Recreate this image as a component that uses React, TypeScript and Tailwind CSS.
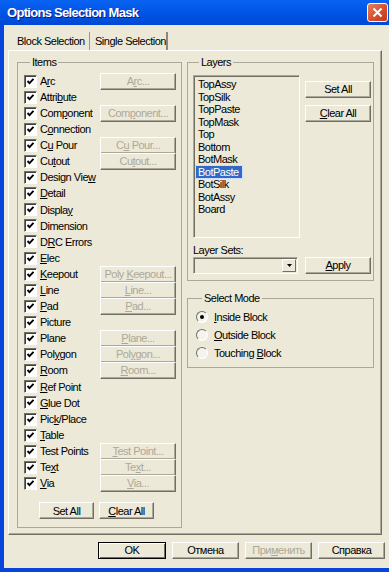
import React from 'react';

const FONT = "font-['Liberation_Sans',Arial,sans-serif]";

// '&' marks the mnemonic (underlined) letter
const Label: React.FC<{ text: string }> = ({ text }) => {
  const i = text.indexOf('&');
  if (i < 0) return <>{text}</>;
  return (
    <>
      {text.slice(0, i)}
      <u>{text.charAt(i + 1)}</u>
      {text.slice(i + 2)}
    </>
  );
};

const Btn: React.FC<{ text: string; disabled?: boolean; def?: boolean; className?: string }> = ({
  text,
  disabled,
  def,
  className = '',
}) => (
  <div
    className={`flex items-center justify-center h-[17px] whitespace-nowrap overflow-hidden text-[11px] tracking-[-0.5px] bg-[#ece9d8] ${
      def
        ? 'border border-black shadow-[inset_1px_1px_0_white,inset_-1px_-1px_0_#716f64]'
        : 'border border-t-white border-l-white border-r-[#716f64] border-b-[#716f64] shadow-[inset_-1px_-1px_0_#aca899]'
    } ${disabled ? 'text-[#aca899]' : 'text-black'} ${className}`}
  >
    <span>
      <Label text={text} />
    </span>
  </div>
);

const Check: React.FC = () => (
  <div className="w-[13px] h-[13px] shrink-0 border border-t-[#716f64] border-l-[#716f64] border-r-white border-b-white bg-white shadow-[inset_1px_1px_0_#404040] flex items-center justify-center">
    <svg width="9" height="9" viewBox="0 0 9 9">
      <polyline points="1.5,4 3.5,6.2 7.5,1.8" fill="none" stroke="black" strokeWidth="1.9" />
    </svg>
  </div>
);

const Radio: React.FC<{ on?: boolean }> = ({ on }) => (
  <div className="w-[12px] h-[12px] shrink-0 rounded-full border border-t-[#716f64] border-l-[#716f64] border-r-white border-b-white bg-[#f4f3ee] flex items-center justify-center">
    {on && <div className="w-[4px] h-[4px] rounded-full bg-black" />}
  </div>
);

const items: [string, string?][] = [
  ['A&rc', 'A&rc...'],
  ['Attri&bute'],
  ['Com&ponent', 'Com&ponent...'],
  ['C&onnection'],
  ['C&u Pour', 'C&u Pour...'],
  ['Cu&tout', 'Cu&tout...'],
  ['Design Vie&w'],
  ['&Detail'],
  ['Displa&y'],
  ['Dimension'],
  ['D&RC Errors'],
  ['&Elec'],
  ['&Keepout', 'Poly &Keepout...'],
  ['&Line', '&Line...'],
  ['&Pad', '&Pad...'],
  ['Picture'],
  ['Plane', '&Plane...'],
  ['Pol&ygon', 'Pol&ygon...'],
  ['&Room', '&Room...'],
  ['&Ref Point'],
  ['&Glue Dot'],
  ['Pic&k/Place'],
  ['&Table'],
  ['Test Points', '&Test Point...'],
  ['Te&xt', 'Te&xt...'],
  ['&Via', '&Via...'],
];

const layers = ['TopAssy', 'TopSilk', 'TopPaste', 'TopMask', 'Top', 'Bottom', 'BotMask', 'BotPaste', 'BotSilk', 'BotAssy', 'Board'];

const Group: React.FC<{ title: string; className?: string; children: React.ReactNode }> = ({ title, className = '', children }) => (
  <fieldset className={`border border-[#aca899] ${className}`}>
    <legend className="ml-[6px] px-[2px] text-[11px] leading-[13px] tracking-[-0.5px]">{title}</legend>
    {children}
  </fieldset>
);

export default function App() {
  return (
    <div className={`w-[389px] h-[572px] flex flex-col bg-[#0845dc] ${FONT} text-black`}>
      {/* title bar */}
      <div className="h-[25px] shrink-0 flex items-center pl-[7px] pr-[1px] bg-gradient-to-b from-[#0a62f2] via-[#0055e5] to-[#0049d4]">
        <span className="flex-1 text-white font-bold text-[13px] tracking-[-0.7px] [text-shadow:1px_1px_0_#0a1883]">
          Options Selection Mask
        </span>
        <div className="w-[21px] h-[19px] rounded-[3px] border border-white bg-gradient-to-br from-[#e8805e] via-[#d9532f] to-[#c0381a] flex items-center justify-center">
          <svg width="11" height="11" viewBox="0 0 11 11">
            <path d="M1.5 1.5 L9.5 9.5 M9.5 1.5 L1.5 9.5" stroke="white" strokeWidth="2" />
          </svg>
        </div>
      </div>

      {/* body */}
      <div className="flex-1 ml-[4px] mb-[4px] bg-[#ece9d8] flex flex-col">
        {/* tabs */}
        <div className="h-[25px] shrink-0 flex items-end text-[11px] tracking-[-0.5px]">
          <div className="ml-[4px] w-[82px] h-[18px] pl-[9px] border-r border-[#919b9c] flex items-center">
            Block Selection
          </div>
          <div className="w-[78px] h-[18px] pl-[5px] border-r-2 border-[#8a887c] flex items-center">Single Selection</div>
        </div>

        {/* tab page */}
        <div className="ml-[4px] w-[374px] h-[485px] shrink-0 flex gap-[5px] pt-[5px] pl-[8px] border border-t-white border-l-white border-r-[#716f64] border-b-[#716f64] shadow-[inset_-1px_-1px_0_#aca899]">
          <Group title="Items" className="w-[165px] h-[472px] px-[6px]">
            <div className="pt-[4px] flex flex-col text-[11px] tracking-[-0.5px]">
              {items.map(([lab, btn]) => (
                <div key={lab} className="h-[16.1px] flex items-center">
                  <Check />
                  <span className="ml-[3px] flex-1 whitespace-nowrap">
                    <Label text={lab} />
                  </span>
                  {btn && <Btn text={btn} disabled className="w-[76px] h-[15px] mr-[-1px]" />}
                </div>
              ))}
              <div className="mt-[11px] ml-[15px] flex gap-[5px]">
                <Btn text="Set All" className="w-[55px]" />
                <Btn text="&Clear All" className="w-[55px]" />
              </div>
            </div>
          </Group>

          <div className="w-[187px] flex flex-col">
            <Group title="Layers" className="h-[225px] pl-[5px]">
              <div className="pt-[6px] flex">
                <div className="w-[107px] h-[163px] border border-t-[#aca899] border-l-[#aca899] border-r-white border-b-white shadow-[inset_1px_1px_0_#716f64] pl-[2px] pt-[2px] text-[11px] tracking-[-0.5px] leading-[12.5px]">
                  {layers.map((l) =>
                    l === 'BotPaste' ? (
                      <div key={l}>
                        <span className="inline-block pl-[2px] pr-[3px] bg-[#316ac5] text-white outline outline-1 outline-dotted outline-[#c3d3ff]">
                          {l}
                        </span>
                      </div>
                    ) : (
                      <div key={l} className="pl-[2px]">
                        {l}
                      </div>
                    ),
                  )}
                </div>
                <div className="ml-[5px] pt-[6px] flex flex-col gap-[7px]">
                  <Btn text="Set All" className="w-[66px]" />
                  <Btn text="&Clear All" className="w-[66px]" />
                </div>
              </div>
              <div className="mt-[6px] text-[11px] tracking-[-0.5px] leading-[13px]">Layer Sets:</div>
              <div className="flex">
                <div className="w-[105px] h-[17px] border border-t-[#aca899] border-l-[#aca899] border-r-white border-b-white shadow-[inset_1px_1px_0_#716f64] flex justify-end p-[1px]">
                  <div className="w-[14px] h-full border border-t-white border-l-white border-r-[#716f64] border-b-[#716f64] flex items-center justify-center">
                    <svg width="5" height="3" viewBox="0 0 5 3">
                      <path d="M0 0 H5 L2.5 3 Z" fill="black" />
                    </svg>
                  </div>
                </div>
                <Btn text="&Apply" className="ml-[7px] w-[66px]" />
              </div>
            </Group>

            <Group title="Select Mode" className="mt-[11px] h-[76px] pl-[8px]">
              <div className="pt-[3px] flex flex-col text-[11px] tracking-[-0.5px]">
                <div className="h-[18px] flex items-center gap-[6px]">
                  <Radio on />
                  <span>
                    <Label text="&Inside Block" />
                  </span>
                </div>
                <div className="h-[18px] flex items-center gap-[6px]">
                  <Radio />
                  <span>
                    <Label text="&Outside Block" />
                  </span>
                </div>
                <div className="h-[18px] flex items-center gap-[6px]">
                  <Radio />
                  <span>
                    <Label text="Touching &Block" />
                  </span>
                </div>
              </div>
            </Group>
          </div>
        </div>

        {/* dialog buttons */}
        <div className="pt-[7px] pr-[4px] flex justify-end gap-[6px]">
          <Btn text="OK" def className="w-[68px]" />
          <Btn text="Отмена" className="w-[67px]" />
          <Btn text="При&менить" disabled className="w-[67px]" />
          <Btn text="Справка" className="w-[67px]" />
        </div>
      </div>
    </div>
  );
}
